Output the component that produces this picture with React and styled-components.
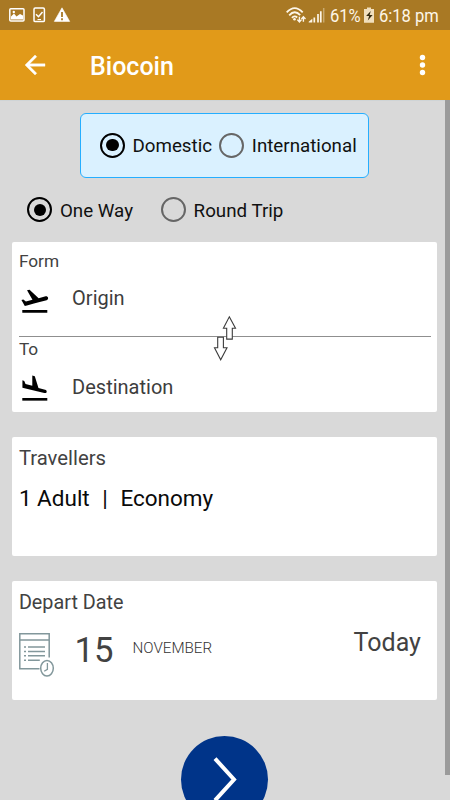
import React from "react";
import styled, { createGlobalStyle } from "styled-components";

const GlobalStyle = createGlobalStyle`
  *, *::before, *::after { box-sizing: border-box; }
  body { margin: 0; font-family: Roboto, sans-serif; background: #d9d9d9; }
  svg { display: block; flex: none; }
`;

const Screen = styled.div`
  width: 450px;
  height: 800px;
  overflow: hidden;
  display: flex;
  flex-direction: column;
  background: #d9d9d9;
`;

const StatusBar = styled.header`
  flex: none;
  height: 30px;
  display: flex;
  align-items: center;
  justify-content: space-between;
  padding: 0 10.5px 0 9px;
  background: #a97924;
  color: #fff;
`;

const StatusGroup = styled.div`
  display: flex;
  align-items: center;
`;

const StatusText = styled.span`
  width: ${(p) => p.$width}px;
  padding-top: 1px;
  font-size: 19px;
  line-height: 30px;
  white-space: nowrap;
  color: #fdf6e8;
  transform: scaleX(${(p) => p.$squeeze});
  transform-origin: left center;
`;

const AppBar = styled.div`
  flex: none;
  height: 70px;
  display: flex;
  align-items: center;
  padding: 0 12px 0 20px;
  background: #e19a19;
`;

const Title = styled.h1`
  flex: 1;
  margin: 4px 0 0 40px;
  font-size: 25px;
  font-weight: 500;
  line-height: 30px;
  color: #fff;
`;

const Body = styled.div`
  flex: 1;
  min-height: 0;
  display: flex;
`;

const Content = styled.main`
  flex: 1;
  min-width: 0;
  display: flex;
  flex-direction: column;
  padding: 11.6px 7.6px 0 12.4px;
  border-top: 1px solid #cfd4d6;
`;

const ScrollThumb = styled.div`
  flex: none;
  width: 5px;
  height: 675px;
  background: #9b9b9b;
`;

const RegionPicker = styled.div`
  flex: none;
  display: flex;
  align-items: center;
  width: 289px;
  height: 65px;
  margin-left: 67.6px;
  padding-left: 19px;
  border: 1px solid #25aeff;
  border-radius: 6px;
  background: #daf1ff;
`;

const TripPicker = styled.div`
  flex: none;
  display: flex;
  align-items: center;
  height: 64.8px;
  padding-left: 15px;
`;

const Option = styled.label`
  display: flex;
  align-items: center;
  gap: 7.5px;
  width: ${(p) => p.$width}px;
  white-space: nowrap;
  color: #111;
`;

const OptionText = styled.span`
  padding-top: 1.5px;
  font-size: 18.75px;
  line-height: 26px;
`;

const RadioMark = styled.span`
  flex: none;
  display: flex;
  align-items: center;
  justify-content: center;
  width: 25px;
  height: 25px;
  border: 2.5px solid ${(p) => (p.$checked ? "#000" : "#666")};
  border-radius: 50%;

  &::after {
    content: "";
    width: 12.5px;
    height: 12.5px;
    border-radius: 50%;
    background: ${(p) => (p.$checked ? "#000" : "transparent")};
  }
`;

const Card = styled.section`
  position: relative;
  flex: none;
  display: flex;
  flex-direction: column;
  height: ${(p) => p.$height}px;
  margin-bottom: ${(p) => p.$gap}px;
  padding: ${(p) => p.$top}px 6.5px 0 6.5px;
  border-radius: 2px;
  background: #fff;
`;

const Label = styled.div`
  flex: none;
  height: 24px;
  font-size: ${(p) => p.$size}px;
  line-height: 24px;
  color: #424242;
`;

const Place = styled.div`
  flex: none;
  display: flex;
  align-items: flex-start;
  height: ${(p) => p.$height}px;
  gap: 22px;
`;

const PlaceIcon = styled.span`
  margin: 11.7px 0 0 -0.4px;
`;

const PlaceName = styled.span`
  margin-top: ${(p) => p.$top}px;
  font-size: 20px;
  line-height: 25px;
  color: #3d3d3d;
`;

const Divider = styled.hr`
  flex: none;
  width: 100%;
  height: 1px;
  margin: 0;
  border: 0;
  background: #8f8f8f;
`;

const SwapButton = styled.button`
  position: absolute;
  left: 197.5px;
  top: 72.6px;
  width: 32px;
  height: 48px;
  padding: 0;
  border: 0;
  background: none;
`;

const Travellers = styled.div`
  display: flex;
  gap: 12.6px;
  margin-top: 14.2px;
  font-size: 22.5px;
  line-height: 28px;
  color: #0a0a0a;
`;

const DateRow = styled.div`
  display: flex;
  align-items: flex-start;
`;

const CalendarIconBox = styled.span`
  margin: 17.6px 0 0 0.1px;
`;

const Day = styled.span`
  width: 58px;
  margin: 15.7px 0 0 18.5px;
  font-size: 34.7px;
  line-height: 40px;
  color: #424242;
`;

const Month = styled.span`
  flex: 1;
  margin-top: 23.6px;
  font-size: 15.2px;
  font-weight: 300;
  line-height: 20px;
  color: #333;
`;

const Relative = styled.span`
  margin: 13px 10px 0 0;
  font-size: 25px;
  line-height: 30px;
  color: #424242;
`;

const NextButton = styled.button`
  flex: none;
  display: flex;
  align-items: center;
  justify-content: center;
  width: 87px;
  height: 87px;
  margin: 11px 0 0 168.6px;
  padding: 0;
  border: 0;
  border-radius: 50%;
  background: #003489;
`;

const NotificationIcons = () => (
  <svg width="62" height="16" viewBox="0 0 62 16" fill="none">
    <rect x="0.8" y="1.7" width="14.2" height="12.2" rx="1" stroke="#fff" strokeWidth="1.5" />
    <path d="M2 12.5V9.5l3-3 2.5 3L11 7l3 1.5v4z" fill="#fff" />
    <circle cx="4.8" cy="5" r="1.2" fill="#fff" />
    <rect x="25" y="1" width="10.4" height="13.6" rx="1.2" stroke="#fff" strokeWidth="1.5" />
    <path d="M27 7.2l2.5 2.5 4-4.7" stroke="#fff" strokeWidth="1.5" />
    <path d="M28.5 12.5h3.5" stroke="#fff" />
    <path d="M53 .8l7.7 13.6H45.3z" fill="#fff" stroke="#fff" strokeLinejoin="round" strokeWidth=".6" />
    <path d="M53 5v5M53 11.2v2" stroke="#a97924" strokeWidth="1.8" />
  </svg>
);

const SignalIcons = () => (
  <svg width="45" height="20" viewBox="0 0 45 20" fill="none" stroke="#fdf6e8">
    <path d="M1.7 7.4Q9.7-1.2 17.7 7.4M4.2 10.3Q9.7 4.3 15.2 10.1M6.9 12.9Q9.6 10 12.2 12.5" strokeWidth="1.8" />
    <circle cx="9.5" cy="14.2" r="1.3" fill="#fdf6e8" stroke="none" />
    <path d="M14.4 11.8v4.8M12.3 14.6l2.1 2.3 2.1-2.3M18.4 16.8V12M16.4 13.9l2-2.1 2.1 2.1" strokeWidth="1.4" />
    <path d="M23.7 17.5v-.8l3.6-2.9v3.7z" fill="#fdf6e8" stroke="none" />
    <path d="M29.3 17.5v-5M33 17.5V9M35.8 17.5V6.3" strokeWidth="1.7" />
    <path d="M38.7 17.5V3" strokeWidth="1.5" opacity=".38" />
  </svg>
);

const BatteryIcon = () => (
  <svg width="17" height="18" viewBox="0 0 17 18">
    <path d="M5 1.5h4v1.6h3v13.7H2V3.1h3z" fill="#f1dfbd" />
    <path d="M8.8 5L4.1 10h3l-1.3 4.4L10.6 9H7.6z" fill="#33290f" />
  </svg>
);

const BackIcon = () => (
  <svg width="30" height="30" viewBox="0 0 24 24" fill="#fff" stroke="#fff" strokeWidth=".3">
    <path d="M20 11H7.83l5.59-5.59L12 4l-8 8 8 8 1.41-1.41L7.83 13H20v-2z" />
  </svg>
);

const MoreIcon = () => (
  <svg width="31" height="30" viewBox="0 0 31 30" fill="#fff">
    <circle cx="15.5" cy="7.5" r="2.7" />
    <circle cx="15.5" cy="15" r="2.7" />
    <circle cx="15.5" cy="22.5" r="2.7" />
  </svg>
);

const TakeoffIcon = () => (
  <svg width="31.6" height="31.6" viewBox="0 0 24 24">
    <path d="M2.5 19h19v2h-19zm19.57-9.36c-.21-.8-1.04-1.28-1.84-1.06L14.92 10l-6.9-6.43-1.93.51 4.14 7.17-4.97 1.33-1.97-1.54-1.45.39 1.82 3.16.77 1.33 1.6-.43 5.31-1.42 4.35-1.16L21 11.49c.81-.23 1.28-1.05 1.07-1.85z" />
  </svg>
);

const LandingIcon = () => (
  <svg width="31.6" height="31.6" viewBox="0 0 24 24">
    <path d="M2.5 19h19v2h-19z" />
    <path d="M2.6 5.6l1.4.4.95 2.3 5.15 1.4V1.9l1.9.5 2.8 8.9 5 1.35c.9.25 1.4.9 1.2 1.7-.2.8-.9 1.1-1.8.85L2.6 11.2z" />
  </svg>
);

const SwapIcon = () => (
  <svg width="32" height="48" viewBox="0 0 32 48" fill="#fff" stroke="#3c3c3c" strokeWidth="1.1">
    <path d="M19.3 1.8l6.2 11.4h-3.2v10.9h-5.6V13.2h-3.3z" />
    <path d="M7.7 22.2h5.7v10.6h3.6l-6.3 11.9-6.2-11.9h3.2z" />
  </svg>
);

const CalendarIcon = () => (
  <svg width="37" height="48" viewBox="0 0 37 48" fill="none" stroke="#82979b" strokeWidth="1.5">
    <path d="M20.5 36.7H.8V1.7h29.4v23.8M.8 8h29.4" />
    <path d="M9 15h17M9 19.4h17M9 23.8h17M9 28.3h11.8M5 15h2M5 19.4h2M5 23.8h2M5 28.3h2" />
    <ellipse cx="28" cy="36.3" rx="6.3" ry="7.8" fill="#fff" />
    <path d="M28.4 31v6.3l-3.2 2" strokeWidth="1.3" />
  </svg>
);

const ChevronIcon = () => (
  <svg width="87" height="87" viewBox="0 0 87 87" fill="none" stroke="#fff" strokeWidth="4">
    <path d="M34 22.6l19 20.9-19 20.9" />
  </svg>
);

const Radio = ({ checked, width, children }) => (
  <Option $width={width}>
    <RadioMark $checked={checked} />
    <OptionText>{children}</OptionText>
  </Option>
);

export default function App() {
  return (
    <Screen>
      <GlobalStyle />
      <StatusBar>
        <NotificationIcons />
        <StatusGroup>
          <SignalIcons />
          <StatusText $width={32.5} $squeeze={0.87}>61%</StatusText>
          <BatteryIcon />
          <StatusText $width={60.5} $squeeze={0.87}>6:18 pm</StatusText>
        </StatusGroup>
      </StatusBar>
      <AppBar>
        <BackIcon />
        <Title>Biocoin</Title>
        <MoreIcon />
      </AppBar>
      <Body>
        <Content>
          <RegionPicker>
            <Radio checked width={119.3}>Domestic</Radio>
            <Radio>International</Radio>
          </RegionPicker>
          <TripPicker>
            <Radio checked width={133.7}>One Way</Radio>
            <Radio>Round Trip</Radio>
          </TripPicker>
          <Card $height={170} $top={7} $gap={24.7}>
            <Label $size={17.3}>Form</Label>
            <Place $height={63}>
              <PlaceIcon><TakeoffIcon /></PlaceIcon>
              <PlaceName $top={12.6}>Origin</PlaceName>
            </Place>
            <Divider />
            <Label $size={17.3}>To</Label>
            <Place $height={50}>
              <PlaceIcon><LandingIcon /></PlaceIcon>
              <PlaceName $top={14}>Destination</PlaceName>
            </Place>
            <SwapButton aria-label="Swap"><SwapIcon /></SwapButton>
          </Card>
          <Card $height={119} $top={8.9} $gap={24.8}>
            <Label $size={20.3}>Travellers</Label>
            <Travellers>
              <span>1 Adult</span>
              <span>|</span>
              <span>Economy</span>
            </Travellers>
          </Card>
          <Card $height={119} $top={9.8} $gap={25}>
            <Label $size={19.8}>Depart Date</Label>
            <DateRow>
              <CalendarIconBox><CalendarIcon /></CalendarIconBox>
              <Day>15</Day>
              <Month>NOVEMBER</Month>
              <Relative>Today</Relative>
            </DateRow>
          </Card>
          <NextButton aria-label="Next"><ChevronIcon /></NextButton>
        </Content>
        <ScrollThumb />
      </Body>
    </Screen>
  );
}
